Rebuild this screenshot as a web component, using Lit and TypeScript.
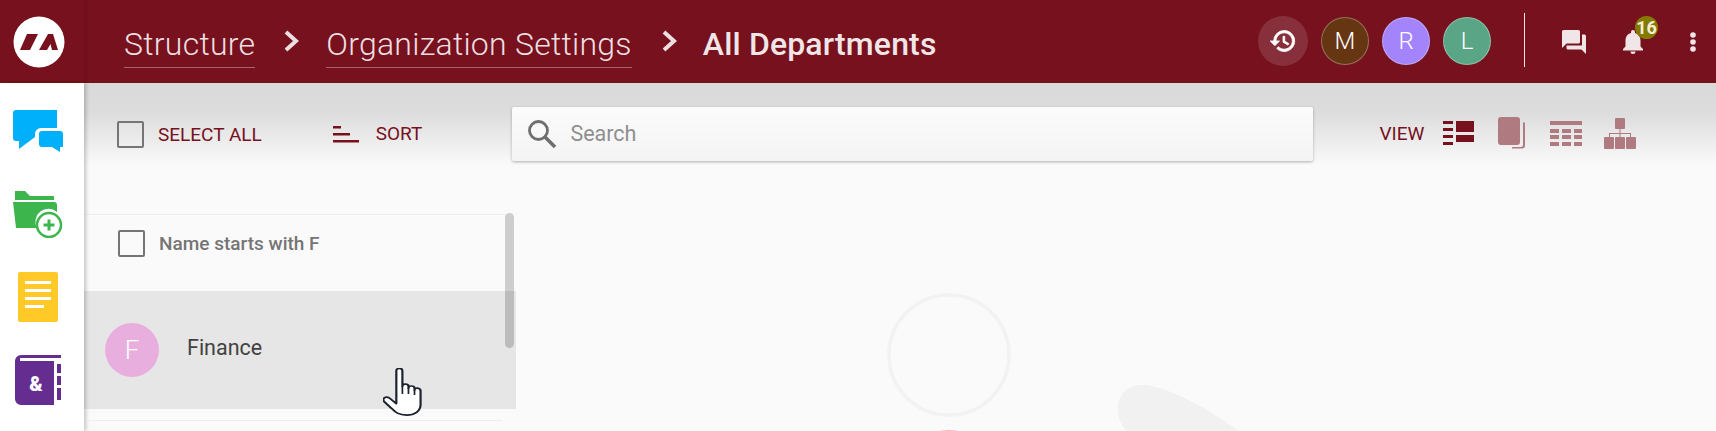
import { LitElement, html, css } from "lit";
import { customElement } from "lit/decorators.js";

@customElement("app-root")
export class AppRoot extends LitElement {
  static styles = css`
    :host { display: block; width: 1716px; height: 431px; overflow: hidden; background: #fafafa; font-family: Roboto, "Liberation Sans", sans-serif; position: relative; }
    * { box-sizing: border-box; }
    svg { display: block; flex: none; }
    .header { height: 83px; background: #76111d; display: flex; align-items: center; color: #fff; }
    .logo-cell { width: 84px; height: 83px; display: flex; align-items: center; justify-content: center; box-shadow: 2px 0 3px rgba(0,0,0,.08); padding-right: 6px; }
    .crumbs { display: flex; align-items: center; margin-left: 40px; font-size: 32px; font-weight: 300; color: #ecdfe1; height: 83px; padding-top: 2px; }
    .crumb { display: block; line-height: 38px; padding: 6px 0 4px; margin-top: 2px; border-bottom: 1px solid rgba(255,255,255,.35); letter-spacing: .25px; }
    .chev { margin: -4px 26px 0 29px; }
    .chev.two { margin: -4px 25px 0 30px; }
    .current { font-weight: 500; color: #f0e6e7; letter-spacing: .15px; margin-top: 2px; }
    .right { margin-left: auto; display: flex; align-items: center; height: 83px; }
    .hist { width: 50px; height: 50px; border-radius: 50%; background: rgba(255,255,255,.13); display: flex; align-items: center; justify-content: center; margin-right: 13px; margin-top: -1px; }
    .av { width: 48px; height: 48px; border-radius: 50%; display: flex; align-items: center; justify-content: center; font-size: 24px; font-weight: 300; color: #fff; margin-right: 13px; margin-top: -1px; border: 1px solid rgba(255,255,255,.3); }
    .av.m { background: #663612; }
    .av.r { background: #a384fb; }
    .av.l { background: #5aa585; margin-right: 33px; }
    .vline { width: 1px; height: 54px; background: #f0e6e7; margin-right: 37px; margin-top: -4px; }
    .bell { position: relative; margin: 0 0 0 37px; }
    .badge { position: absolute; top: -14px; left: 12px; width: 23px; height: 23px; border-radius: 50%; background: #857a00; color: #f3eed8; font-size: 18px; font-weight: 700; display: flex; align-items: center; justify-content: center; }
    .dots { margin: 0 20px 0 47px; }
    .body { display: flex; height: 348px; }
    .side { width: 84px; background: #fff; box-shadow: 2px 0 4px rgba(0,0,0,.22); display: flex; flex-direction: column; align-items: center; position: relative; z-index: 2; padding: 27px 0 0 0; }
    .side svg { margin-right: 8px; }
    .i1 { margin-bottom: 39px; }
    .i2 { margin-bottom: 34px; }
    .i3 { margin-bottom: 33px; }
    .content { flex: 1; display: flex; flex-direction: column; min-width: 0; }
    .toolbar { height: 82px; background: linear-gradient(#d9d9d9 0%, #dcdcdc 35%, #eeeeee 75%, #fafafa 100%); display: flex; align-items: center; color: #76111d; font-size: 19px; padding: 20px 0 0 33px; flex: none; }
    .cb { width: 27px; height: 27px; border: 2px solid #757575; border-radius: 2px; flex: none; }
    .sel { margin-left: 14px; margin-right: 71px; }
    .sort-l { margin-left: 17px; margin-right: 90px; margin-top: -2px; }
    .search { width: 801px; height: 54px; border-radius: 2px; background: linear-gradient(#fbfbfb, #f4f4f4); box-shadow: 0 1px 3px rgba(0,0,0,.3); display: flex; align-items: center; padding-left: 15px; color: #8f8f8f; font-size: 21.5px; margin-top: -1px; }
    .search span { margin-left: 13px; }
    .view { margin-left: 66px; margin-right: 19px; margin-top: -2px; }
    .vi { margin-right: 24px; margin-top: -2px; }
    .vi.last { margin-right: 22px; }
    .lower { flex: 1; display: flex; min-height: 0; position: relative; }
    .list { width: 432px; flex: none; padding-top: 49px; position: relative; }
    .group { height: 77px; margin-right: 11px; margin-left: 1px; border-top: 1px solid #eeeeee; display: flex; align-items: flex-start; padding: 15px 0 0 33px; color: #757575; font-size: 19px; font-weight: 500; }
    .group .cb { margin-right: 14px; }
    .group span { margin-top: 2px; }
    .row { height: 118px; background: #e6e6e6; display: flex; align-items: center; padding-left: 21px; color: #424242; font-size: 21.5px; }
    .fav { width: 54px; height: 54px; border-radius: 50%; background: #e7aede; color: #fff; font-size: 26px; font-weight: 300; display: flex; align-items: center; justify-content: center; margin-right: 28px; margin-top: -1px; }
    .row .t { margin-top: -6px; }
    .div { height: 1px; background: #eeeeee; margin: 11px 14px 0 5px; }
    .bar { position: absolute; left: 421px; top: 48px; width: 9px; height: 135px; border-radius: 5px; background: rgba(0,0,0,.18); }
    .hand { position: absolute; left: 299px; top: 203px; z-index: 3; }
    .canvas { flex: 1; position: relative; min-width: 0; }
    .art { position: absolute; left: 0; top: 0; }
  `;

  render() {
    return html`
      <div class="header">
        <div class="logo-cell">
          <svg width="52" height="52" viewBox="0 0 52 52">
            <circle cx="26" cy="26" r="25.5" fill="#fff"/>
            <path d="M7 34 L14 18 H25 L17 34 Z" fill="#76111d"/>
            <path d="M26 34 L35 18 H40 L45 34 H39 L37.500 28 L34 34 Z" fill="#76111d"/>
          </svg>
        </div>
        <div class="crumbs">
          <span class="crumb">Structure</span>
          <svg class="chev" width="16" height="24" viewBox="0 0 16 24"><path d="M2 3l10 9-10 9" fill="none" stroke="#ecdfe1" stroke-width="4"/></svg>
          <span class="crumb">Organization Settings</span>
          <svg class="chev two" width="16" height="24" viewBox="0 0 16 24"><path d="M2 3l10 9-10 9" fill="none" stroke="#ecdfe1" stroke-width="4"/></svg>
          <span class="current">All Departments</span>
        </div>
        <div class="right">
          <div class="hist">
            <svg width="28" height="28" viewBox="0 0 24 24" fill="#fff" stroke="#fff" stroke-width=".7"><path d="M13 3a9 9 0 0 0-9 9H1l3.900 3.900.1.1 4-4H6a7 7 0 1 1 2.050 4.950L6.640 18.360A9 9 0 1 0 13 3zm-1 5v5l4.250 2.520.770-1.280-3.520-2.090V8z"/></svg>
          </div>
          <div class="av m">M</div>
          <div class="av r">R</div>
          <div class="av l">L</div>
          <div class="vline"></div>
          <svg width="24" height="24" viewBox="0 0 24 24" fill="#f0e6e7"><path d="M1.500 0H16.500A1.500 1.500 0 0 1 18 1.500V12A1.500 1.500 0 0 1 16.500 13.500H4.500L0 18V1.500A1.500 1.500 0 0 1 1.500 0z"/><path d="M20 4.500H22.500A1.500 1.500 0 0 1 24 6V24L19.500 19.500H6A1.500 1.500 0 0 1 4.500 18V15.500H20z"/></svg>
          <div class="bell">
            <svg width="20" height="24" viewBox="0 0 20 24" fill="#f0e6e7"><path d="M10 24a2.600 2.600 0 0 0 2.600-2.500H7.400A2.600 2.600 0 0 0 10 24zM17.500 16.500V10.500c0-3.700-2-6.700-5.500-7.500V2a2 2 0 0 0-4 0v1C4.500 3.800 2.500 6.800 2.500 10.500v6L0 19v1.500h20V19z"/></svg>
            <div class="badge">16</div>
          </div>
          <svg class="dots" width="6" height="20" viewBox="0 0 6 20" fill="#f0e6e7"><circle cx="3" cy="3" r="2.800"/><circle cx="3" cy="10" r="2.800"/><circle cx="3" cy="17" r="2.800"/></svg>
        </div>
      </div>
      <div class="body">
        <div class="side">
          <svg class="i1" width="50" height="42" viewBox="0 0 50 42">
            <path d="M3 0H44V18H28a6 6 0 0 0-6 6V27L6 39V31H3a3 3 0 0 1-3-3V3a3 3 0 0 1 3-3z" fill="#00b0fa"/>
            <path d="M29 21H47a3 3 0 0 1 3 3V37H47V42L39 37H29a3 3 0 0 1-3-3V24a3 3 0 0 1 3-3z" fill="#00b0fa"/>
          </svg>
          <svg class="i2" width="50" height="47" viewBox="0 0 50 47">
            <path d="M2 0H12L17 5H41V9H2z" fill="#3cb64c"/>
            <path d="M0 11H41a3 3 0 0 1 3 3V21A13 13 0 0 0 24 37H3z" fill="#3cb64c"/>
            <circle cx="36" cy="34" r="12" fill="#fff" stroke="#3cb64c" stroke-width="2.500"/>
            <path d="M36 28.500V39.500M30.500 34H41.500" stroke="#3cb64c" stroke-width="3"/>
          </svg>
          <svg class="i3" width="40" height="50" viewBox="0 0 40 50">
            <rect width="40" height="50" rx="2" fill="#ffca28"/>
            <path d="M7 10.500H33M7 18.500H33M7 26.500H33M7 34.500H26" stroke="#fff" stroke-width="3"/>
          </svg>
          <svg width="46" height="50" viewBox="0 0 46 50">
            <path d="M6 0H46V3H5V6H39V50H6a6 6 0 0 1-6-6V6a6 6 0 0 1 6-6z" fill="#652d90"/>
            <path d="M42 9H46V18H42zM42 21H46V30H42zM42 33H46V45H42z" fill="#652d90"/>
            <text x="21" y="36" text-anchor="middle" font-family="Roboto, sans-serif" font-weight="900" font-size="20" fill="#fff">&amp;</text>
          </svg>
        </div>
        <div class="content">
          <div class="toolbar">
            <div class="cb"></div>
            <span class="sel">SELECT ALL</span>
            <svg width="26" height="17" viewBox="0 0 26 17" fill="#76111d"><rect width="8" height="2.500"/><rect y="7" width="17" height="2.500"/><rect y="14" width="26" height="2.500"/></svg>
            <span class="sort-l">SORT</span>
            <div class="search">
              <svg width="30" height="30" viewBox="0 0 30 30" fill="none" stroke="#6e6e6e"><circle cx="11.500" cy="11.500" r="9" stroke-width="2.800"/><path d="M18 18L28 28" stroke-width="3.500"/></svg>
              <span>Search</span>
            </div>
            <span class="view">VIEW</span>
            <svg class="vi" width="31" height="24" viewBox="0 0 31 24" fill="#76111d"><path d="M0 0H10V3H0zM0 7H10V10H0zM0 14H10V17H0zM0 21H10V24H0zM13 0H31V11H13zM13 14H31V21H13z"/></svg>
            <svg class="vi" width="28" height="32" viewBox="0 0 28 32" fill="#b07b80"><rect width="22" height="28" rx="3"/><path d="M25 5V28q0 2-2 2H14v1.500H24q3 0 3-3V6z"/></svg>
            <svg class="vi last" width="32" height="25" viewBox="0 0 32 25" fill="#b07b80"><path d="M0 0H32V4H0zM0 8H9V12H0zM12 8H21V12H12zM24 8H32V12H24zM0 14H9V18H0zM12 14H21V18H12zM24 14H32V18H24zM0 21H9V25H0zM12 21H21V25H12zM24 21H32V25H24z"/></svg>
            <svg class="vi" width="32" height="31" viewBox="0 0 32 31" fill="#b07b80"><rect x="11" width="10" height="11" rx="1"/><rect y="19" width="10" height="12" rx="1"/><rect x="11" y="19" width="10" height="12" rx="1"/><rect x="22" y="19" width="10" height="12" rx="1"/><path d="M15.500 11V15H5V19H6V16H15.500V19H16.500V16H26V19H27V15H16.500V11z"/></svg>
          </div>
          <div class="lower">
            <div class="list">
              <div class="group"><div class="cb"></div><span>Name starts with F</span></div>
              <div class="row"><div class="fav">F</div><span class="t">Finance</span></div>
              <div class="div"></div>
              <div class="bar"></div>
              <svg class="hand" width="40" height="48" viewBox="0 0 33 50" preserveAspectRatio="none">
                <path d="M11 3c0-3.500 5-3.500 5 0V19c0-3 5-3 5 0v2c0-3 5-3 5 0v2c0-3 5-2.500 5 1V38c0 7-5 11-11.500 11C13 49 10 46 7 42L1 35c-2-3 1-6 4-4l6 6z" fill="#fff" stroke="#1c2230" stroke-width="1.800" stroke-linejoin="round"/>
                <path d="M16 19v8M21 21v6M26 23v5" fill="none" stroke="#1c2230" stroke-width="1.400"/>
              </svg>
            </div>
            <div class="canvas">
              <svg class="art" width="1200" height="266" viewBox="0 0 1200 266">
                <circle cx="433" cy="190" r="60" fill="none" stroke="#f2f2f2" stroke-width="3.500"/>
                <path d="M611 266 C 603 258 602 250 602 243 C 602 228 614 220 626 220 C 650 220 695 245 722 266 Z" fill="#f1f1f1"/>
                <ellipse cx="433" cy="267" rx="10" ry="2" fill="#fbb6bb"/>
              </svg>
            </div>
          </div>
        </div>
      </div>
    `;
  }
}
